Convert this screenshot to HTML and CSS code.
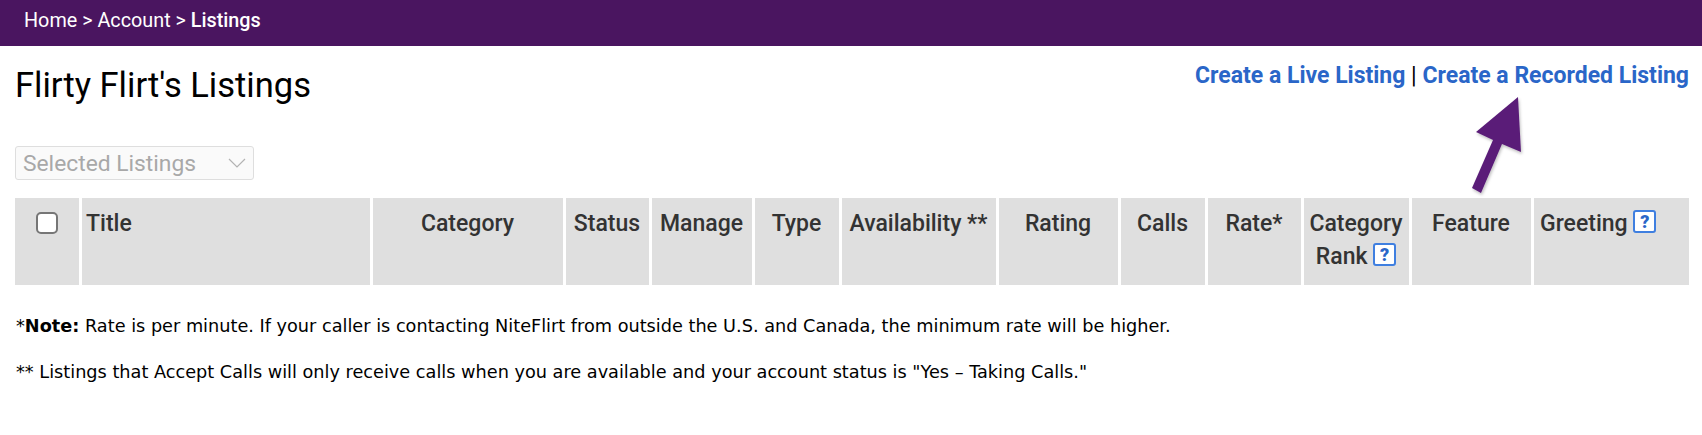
FILE: index.html
```html
<!DOCTYPE html>
<html lang="en">
<head>
    <meta charset="UTF-8">
    <meta name="viewport" content="width=device-width, initial-scale=1.0">
    <title>Listings</title>
    <link rel="stylesheet" href="styles.css">
</head>
<body>
    <nav class="breadcrumb">
        <a href="#">Home</a> &gt; <a href="#">Account</a> &gt; <strong>Listings</strong>
    </nav>

    <main class="content">
        <div class="page-head">
            <h1>Flirty Flirt's Listings</h1>
            <div class="create-links">
                <a href="#">Create a Live Listing</a> <span class="sep">|</span> <a href="#">Create a Recorded Listing</a>
            </div>
        </div>

        <div class="bulk-select">
            <span>Selected Listings</span>
            <svg class="chevron" width="18" height="10" viewBox="0 0 18 10"><path d="M1 1l8 8 8-8" fill="none" stroke="#b3b3b3" stroke-width="1.2"/></svg>
        </div>

        <table class="listings">
            <colgroup>
                <col style="width: 64px">
                <col style="width: 288px">
                <col style="width: 190px">
                <col style="width: 83px">
                <col style="width: 100px">
                <col style="width: 84px">
                <col style="width: 154px">
                <col style="width: 119px">
                <col style="width: 84px">
                <col style="width: 93px">
                <col style="width: 105px">
                <col style="width: 119px">
                <col style="width: 155px">
            </colgroup>
            <thead>
                <tr>
                    <th class="check"><span class="checkbox"></span></th>
                    <th class="left title">Title</th>
                    <th>Category</th>
                    <th>Status</th>
                    <th>Manage</th>
                    <th>Type</th>
                    <th>Availability **</th>
                    <th>Rating</th>
                    <th>Calls</th>
                    <th>Rate*</th>
                    <th>Category Rank <a class="help" href="#">?</a></th>
                    <th>Feature</th>
                    <th class="left">Greeting <a class="help" href="#">?</a></th>
                </tr>
            </thead>
        </table>

        <p class="note">*<b>Note:</b> Rate is per minute. If your caller is contacting NiteFlirt from outside the U.S. and Canada, the minimum rate will be higher.</p>
        <p class="note">** Listings that Accept Calls will only receive calls when you are available and your account status is "Yes – Taking Calls."</p>
    </main>

    <!-- annotation arrow drawn over the page -->
    <svg class="arrow" width="70" height="110" viewBox="0 0 70 110">
        <defs>
            <filter id="arrowShadow" x="-30%" y="-30%" width="160%" height="160%">
                <feDropShadow dx="1" dy="2" stdDeviation="1.500" flood-color="#000" flood-opacity="0.25"/>
            </filter>
        </defs>
        <path d="M53 2L11 37L28 45L7 93L16 98L37 49L56 57Z" fill="#5a1f78" filter="url(#arrowShadow)"/>
    </svg>
</body>
</html>
```

FILE: styles.css
```css
body {
    font-family: Roboto, sans-serif;
    margin: 0;
    background-color: #fff;
    color: #000;
    position: relative;
}
.breadcrumb {
    background-color: #4a1560;
    color: #fff;
    height: 46px;
    line-height: 42px;
    padding-left: 24px;
    font-size: 19.800px;
    box-sizing: border-box;
}
.breadcrumb a {
    color: #fff;
    text-decoration: none;
}
.breadcrumb strong {
    font-weight: 500;
}
.content {
    padding: 0 13px 0 15px;
}
.page-head {
    display: flex;
    justify-content: space-between;
    align-items: flex-start;
    height: 100px;
}
h1 {
    font-size: 34.500px;
    font-weight: 400;
    line-height: 38px;
    margin: 20px 0 0;
}
.create-links {
    font-size: 23px;
    line-height: 24px;
    margin-top: 18px;
}
.create-links a {
    color: #2a66c8;
    font-weight: 700;
    text-decoration: none;
}
.bulk-select {
    width: 239px;
    height: 34px;
    box-sizing: border-box;
    border: 1px solid #dedede;
    border-radius: 3px;
    background: #fafafa;
    color: #a8a8a8;
    font-size: 22.800px;
    padding: 0 7px;
    display: flex;
    align-items: center;
    justify-content: space-between;
}
.listings {
    table-layout: fixed;
    border-collapse: separate;
    border-spacing: 3px 0;
    margin: 18px 0 0 -3px;
    width: 1680px;
}
.listings th {
    background-color: #dfdfdf;
    color: #333;
    font-size: 23px;
    font-weight: 500;
    line-height: 33px;
    height: 87px;
    padding: 9px 5px 12px 4px;
    box-sizing: border-box;
    vertical-align: top;
    text-align: center;
}
.listings th.left {
    text-align: left;
    padding-left: 6px;
}
.listings th.title {
    padding-left: 4px;
}
.checkbox {
    display: inline-block;
    width: 22px;
    height: 22px;
    box-sizing: border-box;
    margin-top: 5px;
    background: #fff;
    border: 2px solid #767676;
    border-radius: 5px;
}
.help {
    display: inline-block;
    width: 23px;
    height: 23px;
    line-height: 19px;
    box-sizing: border-box;
    border: 2px solid #3f7fe0;
    border-radius: 3px;
    background: #fff;
    color: #2a66c8;
    font-size: 18px;
    font-weight: 900;
    text-align: center;
    text-decoration: none;
    vertical-align: 3px;
}
.note {
    font-family: "DejaVu Sans", sans-serif;
    font-size: 17.700px;
    line-height: 22px;
    margin: 0 0 24px 1px;
}
.note:first-of-type {
    margin-top: 30px;
}
.arrow {
    position: absolute;
    left: 1465px;
    top: 95px;
}
```
